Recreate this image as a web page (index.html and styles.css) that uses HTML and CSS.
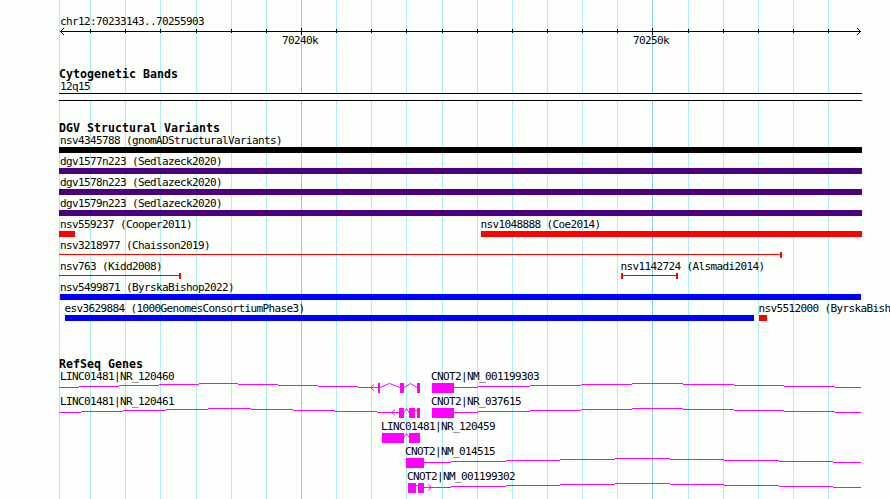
FILE: index.html
```html
<!DOCTYPE html>
<html lang="en">
<head>
<meta charset="utf-8">
<title>chr12:70233143..70255903</title>
<link rel="stylesheet" href="styles.css">
</head>
<body>
<main class="browser">
<svg class="grid" width="890" height="499">
<path class="minor" d="M59.5 0V499M90.5 0V499M125.5 0V499M160.5 0V499M196.5 0V499M231.5 0V499M266.5 0V499M336.5 0V499M371.5 0V499M406.5 0V499M442.5 0V499M477.5 0V499M512.5 0V499M547.5 0V499M582.5 0V499M617.5 0V499M688.5 0V499M723.5 0V499M758.5 0V499M793.5 0V499M828.5 0V499"/>
<path class="major" d="M301.5 0V499M652.5 0V499"/>
</svg>

<section class="track ruler">
<svg class="axis" width="890" height="50">
<text x="60" y="25">chr12:70233143..70255903</text>
<path class="ink" d="M60 31.5H861M90.5 29V33M125.5 29V33M160.5 29V33M196.5 29V33M231.5 29V33M266.5 29V33M301.5 28V35M336.5 29V33M371.5 29V33M406.5 29V33M442.5 29V33M477.5 29V33M512.5 29V33M547.5 29V33M582.5 29V33M617.5 29V33M652.5 28V35M688.5 29V33M723.5 29V33M758.5 29V33M793.5 29V33M828.5 29V33"/>
<path class="ink head" d="M64 28L60.5 31.5L64 35M857 28L860.5 31.5L857 35"/>
<text x="282" y="44">70240k</text><text x="633" y="44">70250k</text>
</svg>
</section>

<section class="track bands">
<h2>Cytogenetic Bands</h2>
<svg class="row" width="890" height="21"><text x="60" y="10">12q15</text><rect class="band" x="59" y="13" width="803" height="8"/><path class="ink" d="M59 13.5H862M59 20.5H862"/></svg>
</section>

<section class="track variants">
<h2>DGV Structural Variants</h2>
<svg class="row" width="890" height="21"><text x="60" y="10">nsv4345788 (gnomADStructuralVariants)</text><rect class="black" x="59" y="13" width="803" height="6"/></svg>
<svg class="row" width="890" height="21"><text x="60" y="10">dgv1577n223 (Sedlazeck2020)</text><rect class="indigo" x="59" y="13" width="803" height="6"/></svg>
<svg class="row" width="890" height="21"><text x="60" y="10">dgv1578n223 (Sedlazeck2020)</text><rect class="indigo" x="59" y="13" width="803" height="6"/></svg>
<svg class="row" width="890" height="21"><text x="60" y="10">dgv1579n223 (Sedlazeck2020)</text><rect class="indigo" x="59" y="13" width="803" height="6"/></svg>
<svg class="row" width="890" height="21"><text x="60" y="10">nsv559237 (Cooper2011)</text><rect class="red" x="59" y="13" width="16" height="6"/><text x="480.4" y="10">nsv1048888 (Coe2014)</text><rect class="red" x="481" y="13" width="381" height="6"/></svg>
<svg class="row" width="890" height="21"><text x="60" y="10">nsv3218977 (Chaisson2019)</text><path class="red" d="M59 15H780V13H782V19H780V16H59Z"/></svg>
<svg class="row" width="890" height="21"><text x="60" y="10">nsv763 (Kidd2008)</text><path class="red" d="M59 15H179V13H181V19H179V16H59Z"/><text x="620.4" y="10">nsv1142724 (Alsmadi2014)</text><path class="red" d="M621 13H623V15H676V13H678V19H676V16H623V19H621Z"/></svg>
<svg class="row" width="890" height="21"><text x="60" y="10">nsv5499871 (ByrskaBishop2022)</text><rect class="blue" x="60" y="13" width="801" height="6"/></svg>
<svg class="row" width="890" height="21"><text x="64.4" y="10">esv3629884 (1000GenomesConsortiumPhase3)</text><rect class="blue" x="65" y="13" width="689" height="6"/><text x="758.4" y="10">nsv5512000 (ByrskaBish</text><rect class="red" x="759" y="13" width="8" height="6"/></svg>
</section>

<section class="track genes">
<h2>RefSeq Genes</h2>
<svg class="row" width="890" height="25"><text x="60" y="10">LINC01481|NR_120460</text><text x="431" y="10">CNOT2|NM_001199303</text>
<path class="intron" d="M59 17.5H79m0-1H119m0-1H159m0-1H199m0-1H238m0 1H278m0 1H318m0 1H358m0 1H378M454 17.5H478m0-1H530m0-1H581m0-1H632m0-1H683m0 1H734m0 1H784m0 1H835m0 1H861"/>
<path class="intron slant" d="M374 14.5L370.5 17.5L374 20.5M380 17.5L389.5 13.5L400 17.5M404 17.5L410.5 13.5L417 17.5"/>
<path class="exon" d="M378 13h2v10h-2zM400 13h4v10h-4zM417 13h3v10h-3zM432 13h22v10h-22z"/></svg>
<svg class="row" width="890" height="25"><text x="60" y="10">LINC01481|NR_120461</text><text x="431" y="10">CNOT2|NR_037615</text>
<path class="intron" d="M59 17.5H81m0-1H123m0-1H166m0-1H208m0-1H251m0 1H293m0 1H335m0 1H377m0 1H399M454 17.5H478m0-1H530m0-1H581m0-1H632m0-1H683m0 1H734m0 1H784m0 1H835m0 1H861M415 15.5H417"/>
<path class="intron slant" d="M395 14.5L391.5 17.5L395 20.5M404 17.5L406.5 13.5L409 17.5"/>
<path class="exon" d="M399 13h5v10h-5zM409 13h6v10h-6zM417 13h3v10h-3zM432 13h22v10h-22z"/></svg>
<svg class="row" width="890" height="25"><text x="381" y="10">LINC01481|NR_120459</text>
<path class="intron slant" d="M404 17.5L406.5 13.5L409 17.5"/>
<path class="exon" d="M382 13h22v10h-22zM409 13h11v10h-11z"/></svg>
<svg class="row" width="890" height="25"><text x="405" y="10">CNOT2|NM_014515</text>
<path class="intron" d="M424 17.5H451m0-1H506m0-1H560m0-1H615m0-1H670m0 1H724m0 1H779m0 1H833m0 1H861"/>
<path class="exon" d="M406 13h18v10h-18z"/></svg>
<svg class="row" width="890" height="25"><text x="407" y="10">CNOT2|NM_001199302</text>
<path class="intron" d="M416 15.5H418M424 17.5H451m0-1H506m0-1H560m0-1H615m0-1H670m0 1H724m0 1H779m0 1H833m0 1H861"/>
<path class="intron slant" d="M428 14.5L431.5 17.5L428 20.5"/>
<path class="exon" d="M408 13h8v10h-8zM418 13h6v10h-6z"/></svg>
</section>
</main>
</body>
</html>
```
FILE: styles.css
```css
body {
  margin: 0;
  overflow: hidden;
  background: #fdfffd;
  color: #000;
}

.browser {
  position: relative;
  width: 890px;
  height: 499px;
  overflow: hidden;
  display: flex;
  flex-direction: column;
}

.grid {
  position: absolute;
  inset: 0;
}

svg {
  display: block;
  shape-rendering: crispEdges;
}

.minor { stroke: #afeeee; }
.major { stroke: #87ceeb; }

.track {
  position: relative;
  flex: none;
}

.ruler { height: 67px; }
.bands { height: 54px; }
.variants { height: 236px; }

h2 {
  margin: 0;
  padding-left: 59px;
  height: 13px;
  font: bold 11.6px/15px "DejaVu Sans Mono", monospace;
  letter-spacing: 0.016px;
  white-space: pre;
}

text {
  font: 11px "DejaVu Sans Mono", monospace;
  letter-spacing: -0.622px;
}

.ink {
  fill: none;
  stroke: #000;
}

.band { fill: #fdfffd; }
.black { fill: #000; }
.indigo { fill: #4b0082; }
.red { fill: #f00; }
.blue { fill: #00f; }
.exon { fill: #f0f; }

.intron {
  fill: none;
  stroke: #f0f;
}

.slant { shape-rendering: auto; }
```
